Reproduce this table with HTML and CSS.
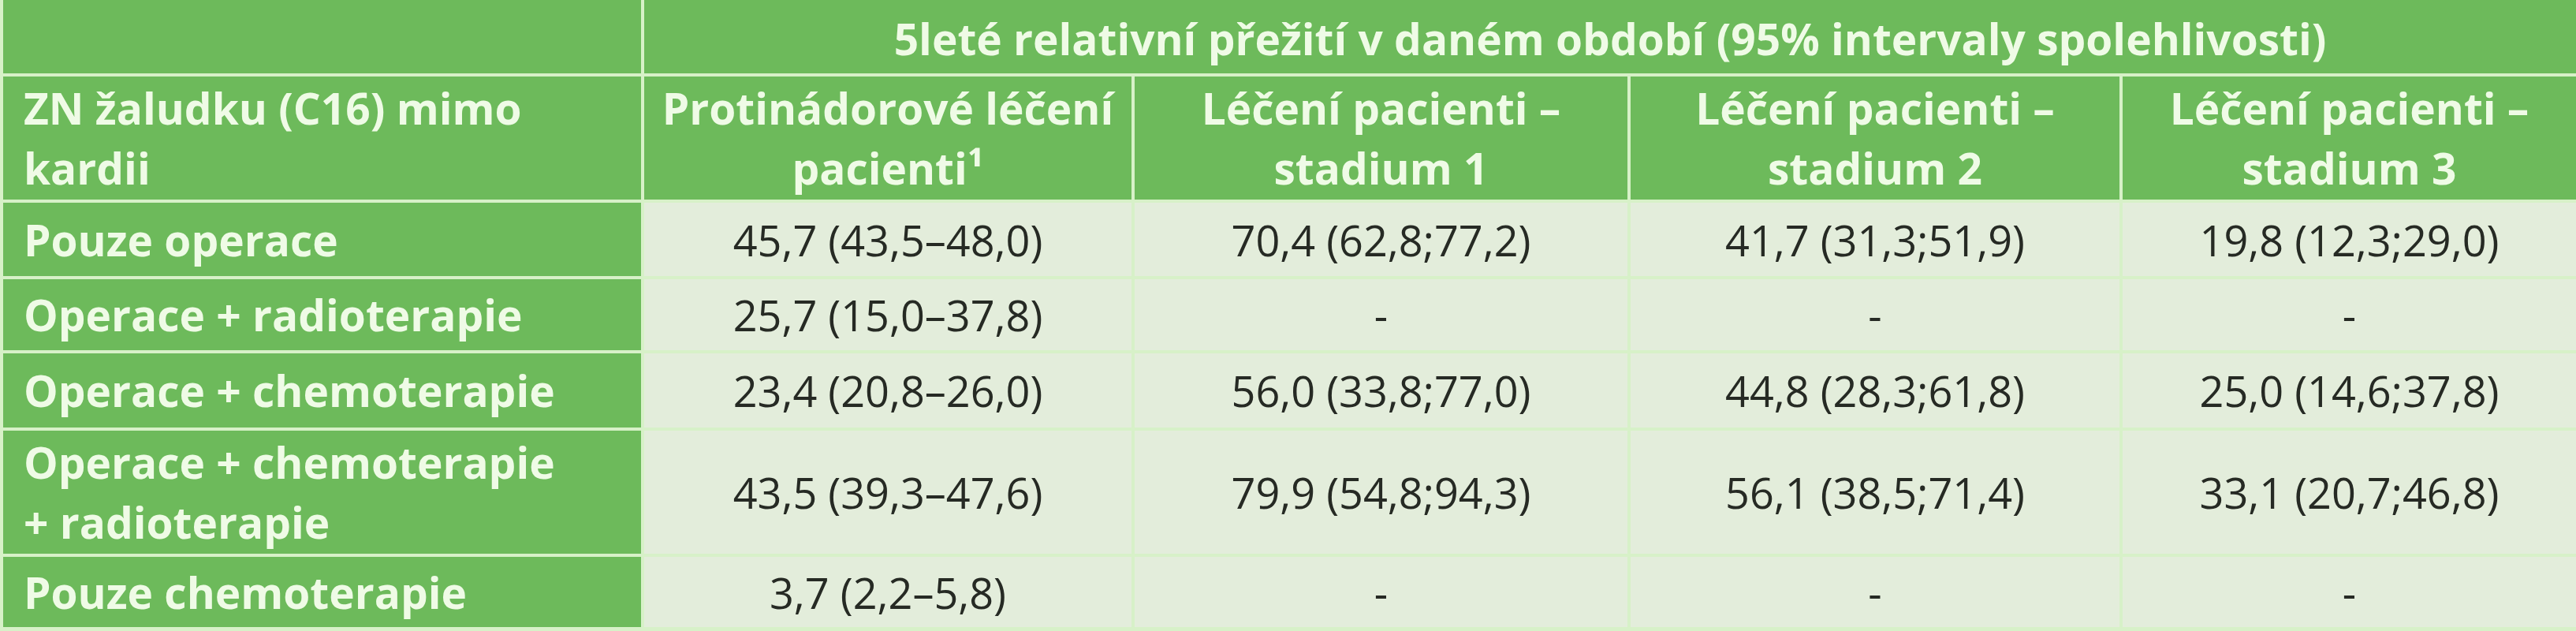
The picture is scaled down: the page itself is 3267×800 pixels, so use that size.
FILE: index.html
```html
<!DOCTYPE html>
<html lang="cs">
<head>
<meta charset="utf-8">
<title>5leté relativní přežití</title>
<link rel="stylesheet" href="styles.css">
</head>
<body>
<div class="table">
  <div class="cell head corner"></div>
  <div class="cell head span"><span>5leté relativní přežití v daném období (95% intervaly spolehlivosti)</span></div>

  <div class="cell head left"><span>ZN žaludku (C16) mimo kardii</span></div>
  <div class="cell head"><span>Protinádorové léčení pacienti¹</span></div>
  <div class="cell head"><span>Léčení pacienti – stadium 1</span></div>
  <div class="cell head"><span>Léčení pacienti – stadium 2</span></div>
  <div class="cell head"><span>Léčení pacienti – stadium 3</span></div>

  <div class="cell head left"><span>Pouze operace</span></div>
  <div class="cell data"><span>45,7 (43,5–48,0)</span></div>
  <div class="cell data"><span>70,4 (62,8;77,2)</span></div>
  <div class="cell data"><span>41,7 (31,3;51,9)</span></div>
  <div class="cell data"><span>19,8 (12,3;29,0)</span></div>

  <div class="cell head left"><span>Operace + radioterapie</span></div>
  <div class="cell data"><span>25,7 (15,0–37,8)</span></div>
  <div class="cell data"><span>-</span></div>
  <div class="cell data"><span>-</span></div>
  <div class="cell data"><span>-</span></div>

  <div class="cell head left"><span>Operace + chemoterapie</span></div>
  <div class="cell data"><span>23,4 (20,8–26,0)</span></div>
  <div class="cell data"><span>56,0 (33,8;77,0)</span></div>
  <div class="cell data"><span>44,8 (28,3;61,8)</span></div>
  <div class="cell data"><span>25,0 (14,6;37,8)</span></div>

  <div class="cell head left"><span>Operace + chemoterapie +&nbsp;radioterapie</span></div>
  <div class="cell data"><span>43,5 (39,3–47,6)</span></div>
  <div class="cell data"><span>79,9 (54,8;94,3)</span></div>
  <div class="cell data"><span>56,1 (38,5;71,4)</span></div>
  <div class="cell data"><span>33,1 (20,7;46,8)</span></div>

  <div class="cell head left"><span>Pouze chemoterapie</span></div>
  <div class="cell data"><span>3,7 (2,2–5,8)</span></div>
  <div class="cell data"><span>-</span></div>
  <div class="cell data"><span>-</span></div>
  <div class="cell data"><span>-</span></div>
</div>
</body>
</html>
```
FILE: styles.css
```css
html, body {
  margin: 0;
  padding: 0;
  background: #f3faea;
}

body {
  width: 3267px;
  height: 800px;
  overflow: hidden;
  font-family: "Open Sans", "Liberation Sans", sans-serif;
}

.table {
  display: grid;
  grid-template-columns: 809px 618px 625px 620px 575px;
  grid-template-rows: 93px 156px 93px 90px 94px 156px 89px;
  gap: 4px;
  padding: 0 0 5px 4px;
  background: #d7f1c8;
  width: 3263px;
}

.cell {
  display: flex;
  align-items: center;
  justify-content: center;
  text-align: center;
}

.head {
  background: #6dba5b;
  color: #effbe6;
  font-weight: 700;
  font-size: 55px;
  line-height: 76px;
  padding: 0 10px;
}

.head.left {
  justify-content: flex-start;
  text-align: left;
  padding: 0 26px;
}

.span {
  grid-column: 2 / span 4;
  padding-top: 4px;
}

.data {
  background: #e3eddb;
  color: #262a24;
  font-weight: 400;
  font-size: 54px;
  line-height: 76px;
  padding: 0 20px;
}
```
